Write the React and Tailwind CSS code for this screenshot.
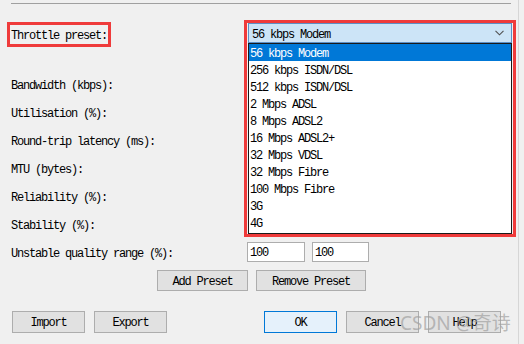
const presets = [
  "56 kbps Modem",
  "256 kbps ISDN/DSL",
  "512 kbps ISDN/DSL",
  "2 Mbps ADSL",
  "8 Mbps ADSL2",
  "16 Mbps ADSL2+",
  "32 Mbps VDSL",
  "32 Mbps Fibre",
  "100 Mbps Fibre",
  "3G",
  "4G",
];

const labels = [
  "Bandwidth (kbps):",
  "Utilisation (%):",
  "Round-trip latency (ms):",
  "MTU (bytes):",
  "Reliability (%):",
  "Stability (%):",
];

function Button({ children, width, primary }) {
  return (
    <div
      className={
        "flex items-center justify-center pt-[2px] border whitespace-nowrap " +
        width +
        (primary ? " border-[#0078d7] bg-[#e5f1fb]" : " border-[#adadad] bg-[#e1e1e1]")
      }
    >
      {children}
    </div>
  );
}

export default function App() {
  return (
    <div className="relative w-[524px] h-[344px] overflow-hidden bg-[#f0f0f0] font-['Liberation_Mono',monospace] text-[12px] tracking-[-1.2px] text-black">
      <div className="w-[519px] h-full border-r border-[#d6d6d6] flex flex-col">
        <div className="mt-[3px] ml-[11px] w-[500px] h-px bg-[#a0a0a0]" />

        {/* throttle preset row */}
        <div className="mt-[16px] h-[27px] flex shrink-0">
          <div className="mt-[2px] ml-[7px] w-[104px] h-[25px] border-[3px] border-[#ef3b3b] flex items-center pt-[3px] pl-px whitespace-nowrap">
            Throttle preset:
          </div>
          <div className="ml-[133px] relative w-[272px]">
            {/* opened dropdown */}
            <div className="absolute left-0 top-0 z-10 w-[272px] h-[217px] border-[3px] border-[#ef3b3b] px-px flex flex-col bg-[#f0f0f0]">
              <div className="h-[20px] shrink-0 border border-[#5b8fc6] bg-[#cce4f7] flex items-center justify-between pl-[3px] pr-[7px]">
                <span className="pt-[3px]">56 kbps Modem</span>
                <svg width="9" height="6" viewBox="0 0 9 6" fill="none">
                  <path d="M0.5 0.8 L4.5 4.8 L8.5 0.8" stroke="#505050" strokeWidth="1.1" />
                </svg>
              </div>
              <div className="flex-1 border border-[#1a1a1a] bg-white flex flex-col">
                {presets.map((p, i) => (
                  <div
                    key={p}
                    className={
                      "h-[17px] shrink-0 flex items-center pt-[3px] pl-px whitespace-nowrap " +
                      (i === 0 ? "bg-[#0078d7] text-white" : "")
                    }
                  >
                    {p}
                  </div>
                ))}
              </div>
            </div>
          </div>
        </div>

        {/* labels */}
        <div className="mt-[23px] flex flex-col">
          {labels.map((l) => (
            <div key={l} className="h-[28px] flex items-center pt-[4px] pl-[11px] whitespace-nowrap">
              {l}
            </div>
          ))}
          <div className="h-[28px] flex items-center">
            <div className="w-[247px] pl-[11px] pt-[4px] whitespace-nowrap">Unstable quality range (%):</div>
            <div className="w-[58px] h-[20px] border border-[#adadad] bg-white flex items-center pt-[2px] pl-[2px]">100</div>
            <div className="ml-[7px] w-[57px] h-[20px] border border-[#adadad] bg-white flex items-center pt-[2px] pl-[2px]">100</div>
          </div>
        </div>

        {/* preset buttons */}
        <div className="mt-[4px] flex pl-[157px] gap-[8px]">
          <Button width="w-[91px] h-[21px]">Add Preset</Button>
          <Button width="w-[110px] h-[21px]">Remove Preset</Button>
        </div>

        {/* dialog buttons */}
        <div className="mt-[20px] flex pl-[12px] pr-[17px]">
          <div className="flex gap-[9px]">
            <Button width="w-[73px] h-[22px]">Import</Button>
            <Button width="w-[73px] h-[22px]">Export</Button>
          </div>
          <div className="ml-auto flex gap-[9px]">
            <Button width="w-[73px] h-[22px]" primary>OK</Button>
            <Button width="w-[73px] h-[22px]">Cancel</Button>
            <Button width="w-[73px] h-[22px]">Help</Button>
          </div>
        </div>
      </div>

      {/* watermark */}
      <div className="absolute left-[400px] top-[310px] text-[19px] leading-[26px] tracking-normal font-['Noto_Sans','Noto_Sans_CJK_SC',sans-serif] text-[#a0a0a0]/70 pointer-events-none">
        CSDN @奇诗
      </div>
    </div>
  );
}
